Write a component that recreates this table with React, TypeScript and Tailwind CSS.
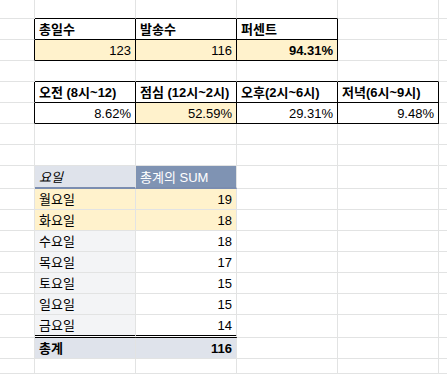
import React from "react";

type C = {
  t?: string;
  a?: "l" | "r";
  b?: boolean;
  i?: boolean;
  bg?: "cream" | "ph" | "pb" | "gray" | "tot";
  rb?: "g" | "k";
  bb?: "g" | "k" | "blue" | "dbl";
  w?: boolean;
};

const rbMap = {
  g: "border-r border-r-[#e2e3e3]",
  k: "border-r border-r-black",
};
const bbMap = {
  g: "border-b border-b-[#e2e3e3]",
  k: "border-b border-b-black",
  blue: "border-b-2 border-b-[#7b8db0]",
  dbl: "border-b-[3px] border-double border-b-black bg-clip-padding",
};
const bgMap = {
  cream: "bg-[#fff2cc]",
  ph: "bg-[#dfe3eb]",
  pb: "bg-[#7f93b3]",
  gray: "bg-[#f3f4f6]",
  tot: "bg-[#dfe3eb]",
};

const E: C = {};

const rows: C[][] = [
  // row0
  [E, { bb: "k" }, { bb: "k" }, { bb: "k" }, E, E],
  // row1
  [
    { rb: "k" },
    { t: "총일수", b: true, rb: "k", bb: "k" },
    { t: "발송수", b: true, rb: "k", bb: "k" },
    { t: "퍼센트", b: true, rb: "k", bb: "k" },
    E,
    E,
  ],
  // row2
  [
    { rb: "k" },
    { t: "123", a: "r", bg: "cream", rb: "k", bb: "k" },
    { t: "116", a: "r", bg: "cream", rb: "k", bb: "k" },
    { t: "94.31%", a: "r", b: true, bg: "cream", rb: "k", bb: "k" },
    E,
    E,
  ],
  // row3
  [E, { bb: "k" }, { bb: "k" }, { bb: "k" }, { bb: "k" }, E],
  // row4
  [
    { rb: "k" },
    { t: "오전 (8시~12)", b: true, rb: "k", bb: "k" },
    { t: "점심 (12시~2시)", b: true, rb: "k", bb: "k" },
    { t: "오후(2시~6시)", b: true, rb: "k", bb: "k" },
    { t: "저녁(6시~9시)", b: true, rb: "k", bb: "k" },
    E,
  ],
  // row5
  [
    { rb: "k" },
    { t: "8.62%", a: "r", rb: "k", bb: "k" },
    { t: "52.59%", a: "r", bg: "cream", rb: "k", bb: "k" },
    { t: "29.31%", a: "r", rb: "k", bb: "k" },
    { t: "9.48%", a: "r", rb: "k", bb: "k" },
    E,
  ],
  // row6
  [E, E, E, E, E, E],
  // row7
  [E, E, E, E, E, E],
  // row8 pivot header
  [
    E,
    { t: "요일", i: true, bg: "ph", bb: "blue" },
    { t: "총계의 SUM", bg: "pb", bb: "blue", w: true },
    E,
    E,
    E,
  ],
  [E, { t: "월요일", bg: "cream" }, { t: "19", a: "r", bg: "cream" }, E, E, E],
  [E, { t: "화요일", bg: "cream" }, { t: "18", a: "r", bg: "cream" }, E, E, E],
  [E, { t: "수요일", bg: "gray" }, { t: "18", a: "r" }, E, E, E],
  [E, { t: "목요일", bg: "gray" }, { t: "17", a: "r" }, E, E, E],
  [E, { t: "토요일", bg: "gray" }, { t: "15", a: "r" }, E, E, E],
  [E, { t: "일요일", bg: "gray" }, { t: "15", a: "r" }, E, E, E],
  [
    E,
    { t: "금요일", bg: "gray", bb: "dbl" },
    { t: "14", a: "r", bb: "dbl" },
    E,
    E,
    E,
  ],
  [
    E,
    { t: "총계", b: true, bg: "tot" },
    { t: "116", a: "r", b: true, bg: "tot" },
    E,
    E,
    E,
  ],
  [E, E, E, E, E, E],
];

function Cell({ c }: { c: C }) {
  const cls = [
    "flex items-end px-[4px] pb-[1px] overflow-hidden whitespace-nowrap text-[13px] leading-[16px]",
    rbMap[c.rb ?? "g"],
    bbMap[c.bb ?? "g"],
    c.bg ? bgMap[c.bg] : "bg-white",
    c.a === "r" ? "justify-end" : "justify-start",
    c.b ? "font-bold" : "font-normal",
    c.i ? "italic" : "not-italic",
    c.w ? "text-white" : "text-black",
  ].join(" ");
  return <div className={cls}>{c.t ? <span>{c.t}</span> : null}</div>;
}

export default function App() {
  return (
    <div className="w-[447px] h-[374px] overflow-hidden bg-white font-['Liberation_Sans','Noto_Sans_CJK_KR',sans-serif]">
      <div className="grid w-[447px] h-[374px] grid-cols-[35px_101px_101px_101px_101px_1fr] grid-rows-[19px_21px_21px_21px_21px_21px_21px_21px_23px_21px_21px_21px_21px_21px_21px_23px_21px_15px]">
        {rows.map((r, ri) =>
          r.map((c, ci) => <Cell key={`${ri}-${ci}`} c={c} />)
        )}
      </div>
    </div>
  );
}
